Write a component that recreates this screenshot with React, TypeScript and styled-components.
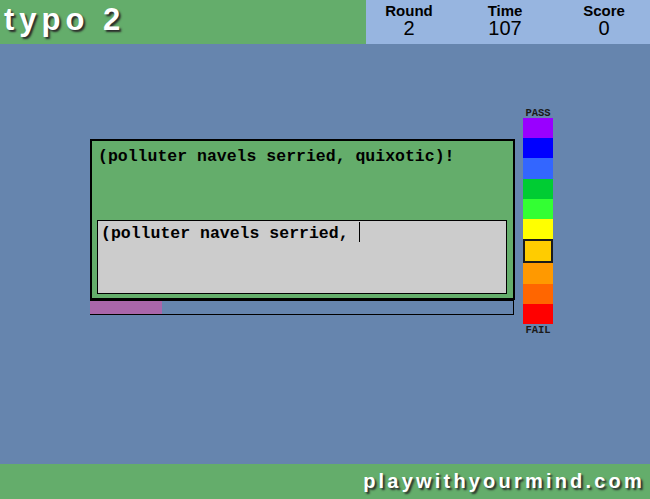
import React from 'react';
import styled, { createGlobalStyle } from 'styled-components';

const GlobalStyle = createGlobalStyle`
  html, body {
    margin: 0;
    padding: 0;
    background-color: #6685ae;
  }
  * {
    box-sizing: border-box;
  }
`;

const Page = styled.div`
  width: 650px;
  height: 499px;
  display: flex;
  flex-direction: column;
  background-color: #6685ae;
  font-family: 'Liberation Sans', Arial, sans-serif;
  overflow: hidden;
`;

const Header = styled.div`
  height: 44px;
  display: flex;
  flex-direction: row;
`;

const TitleBar = styled.div`
  flex: 0 0 366px;
  background-color: #64ad6b;
  padding-left: 4px;
`;

const Title = styled.h1`
  margin: 0;
  color: #ffffff;
  font-size: 31px;
  font-weight: bold;
  line-height: 40px;
  letter-spacing: 5px;
  text-shadow: 2px 2px 2px #2a2a2a;
`;

const StatsPanel = styled.div`
  flex: 1;
  background-color: #97b5e0;
  display: grid;
  grid-template-columns: 86px 106px 92px;
`;

const Stat = styled.div`
  display: flex;
  flex-direction: column;
  align-items: center;
  color: #000000;
  padding-top: 3px;
`;

const StatLabel = styled.div`
  font-size: 15px;
  font-weight: bold;
  line-height: 15px;
`;

const StatValue = styled.div`
  font-size: 20px;
  line-height: 18px;
  margin-top: 1px;
`;

const Main = styled.div`
  flex: 1;
  display: flex;
  flex-direction: row;
  align-items: flex-start;
  padding-left: 90px;
  gap: 8px;
`;

const BoardColumn = styled.div`
  margin-top: 95px;
  display: flex;
  flex-direction: column;
`;

const Board = styled.div`
  width: 425px;
  height: 161px;
  border: 2px solid #000000;
  background-color: #64ad6b;
  padding: 7px 0 0 6px;
  display: flex;
  flex-direction: column;
`;

const MonoText = styled.div`
  font-family: 'Liberation Mono', 'Courier New', monospace;
  font-weight: bold;
  font-size: 16.5px;
  line-height: 18px;
  color: #000000;
  white-space: pre;
`;

const TypingBox = styled.div`
  width: 410px;
  height: 74px;
  margin: 54px 0 0 -1px;
  border: 1px solid #000000;
  background-color: #cccccc;
  padding: 1px 0 0 3px;
`;

const Cursor = styled.span`
  display: inline-block;
  width: 1px;
  height: 20px;
  margin-left: 1px;
  background-color: #000000;
  vertical-align: -4px;
`;

const ProgressTrack = styled.div`
  width: 424px;
  height: 15px;
  border-top: 1px solid #000000;
  border-bottom: 1px solid #000000;
  border-right: 1px solid #000000;
`;

const ProgressFill = styled.div`
  height: 100%;
  background-color: #aa66aa;
`;

const Meter = styled.div`
  margin-top: 64px;
  width: 30px;
  display: flex;
  flex-direction: column;
  align-items: center;
`;

const MeterLabel = styled.div<{ $bottom?: boolean }>`
  font-family: 'Liberation Mono', 'Courier New', monospace;
  font-weight: bold;
  font-size: 10.5px;
  line-height: 10px;
  color: #1a1a1a;
  margin-top: ${(p) => (p.$bottom ? '1px' : '0')};
`;

const MeterStack = styled.div`
  width: 30px;
  height: 206px;
  display: flex;
  flex-direction: column;
`;

const MeterSegment = styled.div<{ $color: string; $active?: boolean }>`
  flex: 1;
  background-color: ${(p) => p.$color};
  border: ${(p) => (p.$active ? '2px solid #1a1a1a' : 'none')};
`;

const Footer = styled.div`
  height: 35px;
  background-color: #64ad6b;
  display: flex;
  justify-content: flex-end;
  padding-right: 5px;
`;

const SiteName = styled.div`
  color: #ffffff;
  font-size: 20px;
  font-weight: bold;
  line-height: 35px;
  letter-spacing: 3.2px;
  text-shadow: 2px 2px 2px #2a2a2a;
`;

const meterColors = [
  '#9900ff',
  '#0000ff',
  '#3366ff',
  '#00cc33',
  '#33ff33',
  '#ffff00',
  '#ffcc00',
  '#ff9900',
  '#ff6600',
  '#ff0000'
];

export default function App() {
  const stats = [
    { label: 'Round', value: '2' },
    { label: 'Time', value: '107' },
    { label: 'Score', value: '0' }
  ];
  const target = '(polluter navels serried, quixotic)!';
  const typed = '(polluter navels serried, ';
  const progress = 72 / 424;
  const level = 6;

  return (
    <>
      <GlobalStyle />
      <Page>
        <Header>
          <TitleBar>
            <Title>typo 2</Title>
          </TitleBar>
          <StatsPanel>
            {stats.map((s) => (
              <Stat key={s.label}>
                <StatLabel>{s.label}</StatLabel>
                <StatValue>{s.value}</StatValue>
              </Stat>
            ))}
          </StatsPanel>
        </Header>
        <Main>
          <BoardColumn>
            <Board>
              <MonoText>{target}</MonoText>
              <TypingBox>
                <MonoText>
                  {typed}
                  <Cursor />
                </MonoText>
              </TypingBox>
            </Board>
            <ProgressTrack>
              <ProgressFill style={{ width: `${progress * 100}%` }} />
            </ProgressTrack>
          </BoardColumn>
          <Meter>
            <MeterLabel>PASS</MeterLabel>
            <MeterStack>
              {meterColors.map((c, i) => (
                <MeterSegment key={c} $color={c} $active={i === level} />
              ))}
            </MeterStack>
            <MeterLabel $bottom>FAIL</MeterLabel>
          </Meter>
        </Main>
        <Footer>
          <SiteName>playwithyourmind.com</SiteName>
        </Footer>
      </Page>
    </>
  );
}
